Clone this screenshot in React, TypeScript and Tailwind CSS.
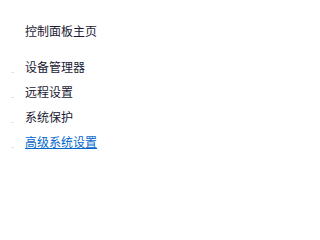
import React from "react";

const items = ["设备管理器", "远程设置", "系统保护"];

export default function App() {
  return (
    <div
      className="w-[210px] h-[203px] bg-white text-[12px] text-[#1a1a33]"
      style={{ fontFamily: '"Microsoft YaHei", "Noto Sans CJK SC", sans-serif' }}
    >
      <div className="pt-[18px] pl-[25px] leading-[25px]">控制面板主页</div>
      <div className="mt-[11px] flex flex-col">
        {items.map((t) => (
          <div key={t} className="flex h-[25px] items-center">
            <span className="ml-[11px] mt-[11px] h-[1px] w-[3px] bg-[#e4e4e4]" />
            <span className="ml-[11px] leading-[25px]">{t}</span>
          </div>
        ))}
        <div className="flex h-[25px] items-center">
          <span className="ml-[11px] mt-[11px] h-[1px] w-[3px] bg-[#e4e4e4]" />
          <a className="ml-[11px] leading-[25px] text-[#0066cc] underline">
            高级系统设置
          </a>
        </div>
      </div>
    </div>
  );
}
